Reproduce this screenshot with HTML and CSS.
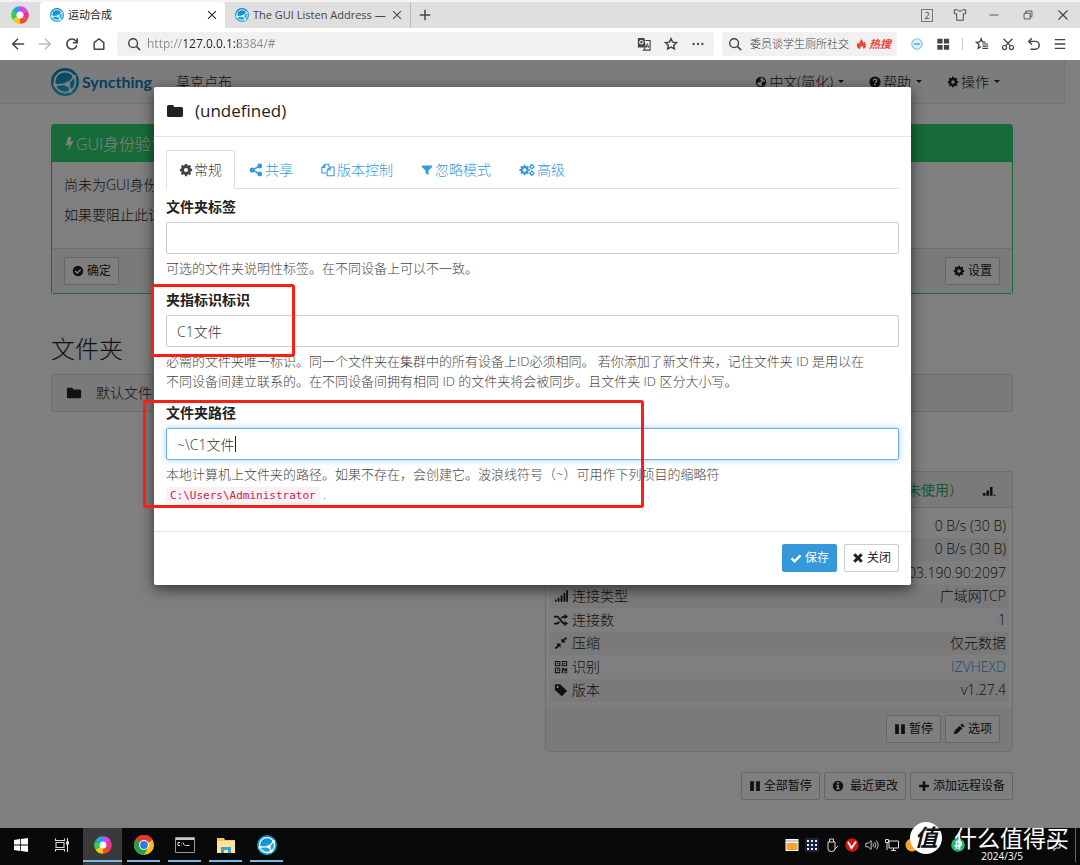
FILE: index.html
```html
<!DOCTYPE html>
<html lang="zh-CN">
<head>
<meta charset="utf-8">
<title>运动合成</title>
<link rel="stylesheet" href="styles.css">
</head>
<body>
<svg class="defs" aria-hidden="true">
  <defs>
    <linearGradient id="sync-blue" x1="0" y1="0" x2="0" y2="1"><stop offset="0" stop-color="#0882c8"/><stop offset="1" stop-color="#26b6db"/></linearGradient>
  </defs>
  <symbol id="sync" viewBox="0 0 32 32"><circle cx="16" cy="16" r="16" fill="url(#sync-blue)"/><g fill="none" stroke="#fff" stroke-width="2"><circle cx="16" cy="16" r="12"/><path d="M19 18.500L26.500 10M19 18.500L4.500 19.500M19 18.500L23 25.500"/></g><g fill="#fff"><circle cx="19" cy="18.500" r="3"/><circle cx="26.500" cy="10" r="2.200"/><circle cx="4.800" cy="19.500" r="2.200"/><circle cx="22.500" cy="26" r="2.200"/></g></symbol>
  <symbol id="swirl" viewBox="0 0 20 20"><g fill="none" stroke-width="5.500"><path d="M10 4A6 6 0 0 1 15.200 7" stroke="#d646e8"/><path d="M15.200 7A6 6 0 0 1 15.200 13" stroke="#f0348c"/><path d="M15.200 13A6 6 0 0 1 10 16" stroke="#f34a2a"/><path d="M10 16A6 6 0 0 1 4.800 13" stroke="#f9c51d"/><path d="M4.800 13A6 6 0 0 1 4.800 7" stroke="#38cf4b"/><path d="M4.800 7A6 6 0 0 1 10 4" stroke="#2c9df0"/></g><circle cx="10" cy="10" r="3.500" fill="#fff"/></symbol>
  <symbol id="close" viewBox="0 0 16 16"><path d="M3.500 3.500l9 9m0-9l-9 9" fill="none" stroke="currentColor" stroke-width="1.200"/></symbol>
  <symbol id="add" viewBox="0 0 16 16"><path d="M8 1v14M1 8h14" fill="none" stroke="currentColor" stroke-width="2"/></symbol>
  <symbol id="back" viewBox="0 0 16 16"><path d="M15 8H2.500M8 2L2 8l6 6" fill="none" stroke="currentColor" stroke-width="1.700"/></symbol>
  <symbol id="forward" viewBox="0 0 16 16"><path d="M1 8h12.500M8 2l6 6-6 6" fill="none" stroke="currentColor" stroke-width="1.700"/></symbol>
  <symbol id="reload" viewBox="0 0 16 16"><path d="M13.500 9.500A5.800 5.800 0 1 1 12.500 4.500L14 6M14 1.500V6.500H9" fill="none" stroke="currentColor" stroke-width="1.700"/></symbol>
  <symbol id="home" viewBox="0 0 16 16"><path d="M2.500 6.500L8 2l5.500 4.500V14h-11z" fill="none" stroke="currentColor" stroke-width="1.700" stroke-linejoin="round"/></symbol>
  <symbol id="search" viewBox="0 0 16 16"><circle cx="7" cy="7" r="5" fill="none" stroke="currentColor" stroke-width="1.600"/><path d="M10.700 10.700L15 15" stroke="currentColor" stroke-width="1.800"/></symbol>
  <symbol id="translate" viewBox="0 0 16 16"><path d="M1 1h7.500l1.500 11H1z" fill="currentColor"/><path d="M9.500 4H15v11H7.500l2-3" fill="none" stroke="currentColor" stroke-width="1.300"/><circle cx="5" cy="6" r="2" fill="none" stroke="#fff" stroke-width="1.200"/><path d="M10 12.500l1.800-5 1.800 5M10.600 11h2.500" fill="none" stroke="currentColor"/></symbol>
  <symbol id="star" viewBox="0 0 16 16"><path d="M8 1.800l1.900 4 4.400.6-3.200 3 .8 4.300L8 11.600l-3.900 2.100.8-4.300-3.200-3 4.400-.6z" fill="none" stroke="currentColor" stroke-width="1.600"/></symbol>
  <symbol id="dots" viewBox="0 0 16 16"><g fill="currentColor"><circle cx="3" cy="8" r="1.300"/><circle cx="8" cy="8" r="1.300"/><circle cx="13" cy="8" r="1.300"/></g></symbol>
  <symbol id="fire" viewBox="0 0 16 16"><path d="M8 1c1 2 3 3.500 3.500 6L13 5c2 4 2.500 8-2 10 1-2-.5-3.500-2-5-1 2-3 3-2 5-4.500-1-6-5-3-9l1.500 2C5.500 5 8 4 8 1z" fill="#f2403a"/></symbol>
  <symbol id="minus-circle" viewBox="0 0 16 16"><circle cx="8" cy="8" r="6" fill="#dceffd" stroke="#7cbff2" stroke-width="1.200"/><path d="M4.500 8h7" stroke="#4aa2e8" stroke-width="1.600"/></symbol>
  <symbol id="apps" viewBox="0 0 16 16"><path d="M1.500 2h6v5.500h-6zM9 2h6v5.500H9zM1.500 9h6v5.500h-6zM9 9h6v5.500H9z" fill="currentColor"/></symbol>
  <symbol id="fav" viewBox="0 0 16 16"><path d="M12 6L8.500 5.700 7 2 5.500 5.700 1.500 6l3 2.600L3.500 13 7 10.800" fill="none" stroke="currentColor" stroke-width="1.500"/><path d="M8.500 8H15M8.500 10.500H15M8.500 13H15" stroke="currentColor" stroke-width="1.400"/></symbol>
  <symbol id="cut" viewBox="0 0 16 16"><g fill="none" stroke="currentColor" stroke-width="1.400"><circle cx="4" cy="12" r="2.300"/><circle cx="12" cy="12" r="2.300"/><path d="M5.300 10L13 2M10.700 10L3 2"/></g></symbol>
  <symbol id="undo" viewBox="0 0 16 16"><path d="M5.500 1.500L2 5l3.500 3.500M2 5h7.500a4.500 4.500 0 0 1 0 9H4" fill="none" stroke="currentColor" stroke-width="1.700"/></symbol>
  <symbol id="menu" viewBox="0 0 16 16"><path d="M2 3h12M2 8h12M2 13h12" stroke="currentColor" stroke-width="1.700"/></symbol>
  <symbol id="shirt" viewBox="0 0 16 16"><path d="M5 2H1.500v4.500h2.700V14h7.600V6.500h2.700V2H11l-1.500 1.500h-3z" fill="none" stroke="currentColor" stroke-width="1.100"/></symbol>
  <symbol id="minimize" viewBox="0 0 16 16"><path d="M3 8h10" stroke="currentColor"/></symbol>
  <symbol id="restore" viewBox="0 0 16 16"><path d="M3.500 6h7v6.500h-7zM5.500 6V3.500h7V10h-2" fill="none" stroke="currentColor"/></symbol>
  <symbol id="globe" viewBox="0 0 16 16"><circle cx="8" cy="8" r="6.300" fill="none" stroke="currentColor" stroke-width="1.400"/><path d="M3 4l3-2 2 1-1 2 2 1-2 2-2 0-1 2-2-3zM9 8l3-1 2 1-1 4-3 2-1-3zM10 2l3 2-2 1z" fill="currentColor"/></symbol>
  <symbol id="question" viewBox="0 0 16 16"><circle cx="8" cy="8" r="7.500" fill="currentColor"/><path d="M5.700 6.300C5.800 3.300 10.500 3.500 10.300 6.300 10.200 7.800 8 7.800 8 9.500" fill="none" stroke="#fff" stroke-width="1.800"/><path d="M7 10.800h2v2H7z" fill="#fff"/></symbol>
  <symbol id="cog" viewBox="0 0 16 16"><circle cx="8" cy="8" r="4" fill="none" stroke="currentColor" stroke-width="3.400"/><path d="M8 1v3M8 12v3M1 8h3M12 8h3M3 3l2.200 2.200M10.800 10.800L13 13M13 3l-2.200 2.200M5.200 10.800L3 13" stroke="currentColor" stroke-width="2.600"/></symbol>
  <symbol id="cogs" viewBox="0 0 20 16"><circle cx="7" cy="8" r="3.600" fill="none" stroke="currentColor" stroke-width="2.600"/><path d="M7 1.500v2M7 12.500v2M.5 8h2M11.500 8h2M2.400 3.400l1.500 1.500M10.100 11.100l1.500 1.500M11.600 3.400l-1.500 1.500M3.900 11.100l-1.500 1.500" stroke="currentColor" stroke-width="2.300"/><g fill="none" stroke="currentColor" stroke-width="1.500"><circle cx="16" cy="4" r="2"/><circle cx="16" cy="12" r="2"/><path d="M16 .5v1.500M16 6v1.500M12.700 4h1.300M18 4h1.500M16 8.500V10M16 14v1.500M12.700 12h1.300M18 12h1.500"/></g></symbol>
  <symbol id="bolt" viewBox="0 0 10 16"><path d="M4 1h3.500L6 5.500l3.500-.8L4 15.500l1.500-7L1.800 9.400z" fill="currentColor"/></symbol>
  <symbol id="check-circle" viewBox="0 0 16 16"><circle cx="8" cy="8" r="7" fill="currentColor"/><path d="M4.300 8l2.700 2.700 4.700-4.700" fill="none" stroke="#fff" stroke-width="2"/></symbol>
  <symbol id="folder" viewBox="0 0 18 16"><path d="M1 3.500Q1 2 2.500 2h4Q8 2 8 3.500V4h7.500Q17 4 17 5.500v7q0 1.500-1.500 1.500h-13Q1 14 1 12.500z" fill="currentColor"/></symbol>
  <symbol id="share" viewBox="0 0 16 16"><path d="M12.500 3.500L4 8l8.500 4.500" fill="none" stroke="currentColor" stroke-width="1.800"/><g fill="currentColor"><circle cx="12.300" cy="3.500" r="2.800"/><circle cx="3.700" cy="8" r="2.900"/><circle cx="12.300" cy="12.500" r="2.800"/></g></symbol>
  <symbol id="files" viewBox="0 0 16 16"><path d="M6 11.500H1V5l3.500-3.500H9v3M4.500 1.500V5H1M7 8l3.500-3.500H15v10H7zM10.500 4.500V8H7" fill="none" stroke="currentColor" stroke-width="1.200"/></symbol>
  <symbol id="filter" viewBox="0 0 16 16"><path d="M1 2h14v1.500L10 8.500v6.500L6 12V8.500L1 3.500z" fill="currentColor"/></symbol>
  <symbol id="check" viewBox="0 0 16 16"><path d="M2 8.500l4 4 8-8" fill="none" stroke="currentColor" stroke-width="3.200"/></symbol>
  <symbol id="times" viewBox="0 0 16 16"><path d="M3 3l10 10M13 3L3 13" stroke="currentColor" stroke-width="4"/></symbol>
  <symbol id="signal" viewBox="0 0 16 16"><path d="M1 12h2v2.500H1zM4.200 10h2.100v4.500H4.200zM7.500 7.500h2.200v7H7.500zM10.800 4.500H13v10h-2.200zM14 1.500h2v13h-2z" fill="currentColor"/></symbol>
  <symbol id="signal-low" viewBox="0 0 16 16"><path d="M1 11.500h3v3H1zM5 8.500h3v6H5zM9 4.500h3v10H9zM13 13.500h2.500v1H13z" fill="currentColor"/></symbol>
  <symbol id="random" viewBox="0 0 16 16"><path d="M0 4h3c4 0 5 8 9 8h1M0 12h3c1.500 0 2.300-.8 3-2M8.500 6c.8-1.200 1.800-2 3.500-2h1" fill="none" stroke="currentColor" stroke-width="2"/><path d="M12 1l4 3-4 3zM12 9l4 3-4 3z" fill="currentColor"/></symbol>
  <symbol id="compress" viewBox="0 0 16 16"><path d="M8.500 7.500v-5l1.700 1.700L13.400 1 15 2.600l-3.200 3.200 1.700 1.700zM7.500 8.500v5l-1.700-1.700L2.600 15 1 13.400l3.200-3.200-1.700-1.700z" fill="currentColor"/></symbol>
  <symbol id="qr" viewBox="0 0 16 16"><path d="M1.600 1.600h5v5h-5zM9.400 1.600h5v5h-5zM1.600 9.400h5v5h-5z" fill="none" stroke="currentColor" stroke-width="1.200"/><path d="M3.300 3.300h1.600v1.600H3.300zM11.100 3.300h1.600v1.600h-1.600zM3.300 11.100h1.600v1.600H3.300zM9 9h3v1.500h1.500V9H15v4h-3v-1.500h-1.500V15H9zM12 14h3v1h-3z" fill="currentColor"/></symbol>
  <symbol id="tag" viewBox="0 0 16 16"><path fill-rule="evenodd" d="M1 2.500Q1 1.500 2 1.500h5L15 9l-6 6-8-7zM4 3.200a1.300 1.300 0 1 0 .1 0z" fill="currentColor"/></symbol>
  <symbol id="pause" viewBox="0 0 16 16"><path d="M1.500 1.500h5v13h-5zM9.500 1.500h5v13h-5z" fill="currentColor"/></symbol>
  <symbol id="pencil" viewBox="0 0 16 16"><path d="M1 15l1-4.500L9 3.500 12.500 7l-7 7zM10 2.500L11.500 1q.5-.5 1 0L15 3.500q.5.500 0 1L13.500 6z" fill="currentColor"/></symbol>
  <symbol id="info" viewBox="0 0 16 16"><circle cx="8" cy="8" r="7" fill="currentColor"/><path d="M6.800 2.800h2.400v2.200H6.800zM5.800 6.300h3.400v4.700h1.200v1.800H5.600V11h1.200V8h-1z" fill="#fff"/></symbol>
  <symbol id="plus" viewBox="0 0 16 16"><path d="M8 1.500v13M1.500 8h13" stroke="currentColor" stroke-width="3.400"/></symbol>
  <symbol id="windows" viewBox="0 0 16 16"><path d="M1 3l6-.9v5.500H1zM7.800 2L15 1v6.600H7.800zM1 8.400h6v5.500L1 13zM7.800 8.400H15V15l-7.200-1z" fill="#fff"/></symbol>
  <symbol id="taskview" viewBox="0 0 16 16"><path d="M2 5.500h8v5H2zM1.500 1.500v2h9v-2M1.500 14.500v-2h9v2M13.500 1v14" fill="none" stroke="#ddd" stroke-width="1.100"/><path d="M12 4.500h3v3h-3z" fill="#ddd"/></symbol>
  <symbol id="chrome" viewBox="0 0 20 20"><circle cx="10" cy="10" r="10" fill="#fbc116"/><path d="M10 10L1.300 5A10 10 0 0 1 18.700 5z" fill="#e33b2e"/><path d="M10 10L1.300 5A10 10 0 0 0 10 20l4.300-7.500z" fill="#24a148"/><circle cx="10" cy="10" r="5" fill="#fff"/><circle cx="10" cy="10" r="3.900" fill="#3178e6"/></symbol>
  <symbol id="terminal" viewBox="0 0 20 16"><path d="M.5.500h19v15H.5z" fill="#080808" stroke="#999"/><path d="M1 1h18v2H1z" fill="#c9c9c9"/><path d="M5 5.500H3v3h2M6.500 6v.5M6.500 8v.5M8 5.500l1.500 3M10.500 8.500h4" fill="none" stroke="#ddd"/></symbol>
  <symbol id="explorer" viewBox="0 0 20 18"><path d="M1 2h7l1 2h10v13H1z" fill="#f5c95b"/><path d="M1 5h18v12H1z" fill="#ffe59a"/><path d="M5 17v-6h10v6h-3v-3H8v3z" fill="#3ba3dc"/></symbol>
  <symbol id="tray-window" viewBox="0 0 14 14"><path d="M.5 1h13v12H.5z" fill="#fff"/><path d="M1.500 5h11v7h-11z" fill="#f6a429"/><path d="M1 3h12" stroke="#999"/></symbol>
  <symbol id="tray-grid" viewBox="0 0 14 14"><path d="M0 0h14v14H0z" fill="#17233b"/><path d="M2 3h10M2 7h10M2 11h10" stroke="#e6ebf5" stroke-width="2" stroke-dasharray="2 2"/></symbol>
  <symbol id="tray-usb" viewBox="0 0 14 14"><path d="M4.500 4V1h4v3M3 4h7v7q0 2.500-3.500 2.500T3 11zM10 11l3-3" fill="none" stroke="#ddd"/></symbol>
  <symbol id="tray-v" viewBox="0 0 14 14"><circle cx="7" cy="7" r="6.700" fill="#ce1618"/><path d="M3 4l3.500 6L11 3.500" fill="none" stroke="#fff" stroke-width="1.900"/></symbol>
  <symbol id="tray-sound" viewBox="0 0 16 14"><path d="M1 5h2.500L7 2v10L3.500 9H1zM9 5q1.500 2 0 4M11 3.500q3 3.500 0 7M13 2q4 5 0 10" fill="none" stroke="#ddd"/></symbol>
  <symbol id="tray-net" viewBox="0 0 14 14"><path d="M4 3h9.500v7H4zM8.500 10v2.500M6 12.500h5M.5 1.500h3v3h-3zM2 4.500V12" fill="none" stroke="#ddd"/></symbol>
  <symbol id="tray-orange" viewBox="0 0 14 14"><circle cx="7" cy="7" r="6.500" fill="#f7a325"/></symbol>
  <symbol id="tray-green" viewBox="0 0 14 14"><circle cx="7" cy="7" r="6.800" fill="#20ba72"/><path d="M5.500 11V3.500H8a2 2 0 0 1 0 4.500H3.500" fill="none" stroke="#fff" stroke-width="1.500"/></symbol>
  <symbol id="tray-note" viewBox="0 0 14 14"><path d="M1 2h12v8H9l-2 2.500V10H1z" fill="none" stroke="#ddd"/></symbol>
</svg>

<header class="browser">
  <div class="tabstrip">
    <button class="app-logo" aria-label="浏览器"><svg class="i20"><use href="#swirl"/></svg></button>
    <div class="tab tab-active"><svg class="i14"><use href="#sync"/></svg><span class="tab-title">运动合成</span><button aria-label="关闭标签"><svg class="i14"><use href="#close"/></svg></button></div>
    <div class="tab tab-other"><svg class="i14"><use href="#sync"/></svg><span class="tab-title">The GUI Listen Address —</span><button aria-label="关闭标签"><svg class="i14"><use href="#close"/></svg></button></div>
    <button class="new-tab" aria-label="新标签"><svg class="i12"><use href="#add"/></svg></button>
    <div class="window-controls">
      <button class="count">2</button>
      <button aria-label="皮肤"><svg class="i14"><use href="#shirt"/></svg></button>
      <button aria-label="最小化"><svg class="i14"><use href="#minimize"/></svg></button>
      <button aria-label="还原"><svg class="i14"><use href="#restore"/></svg></button>
      <button aria-label="关闭"><svg class="i16"><use href="#close"/></svg></button>
    </div>
  </div>
  <div class="toolbar">
    <div class="nav-buttons">
      <button aria-label="后退"><svg class="i14"><use href="#back"/></svg></button>
      <button class="disabled" aria-label="前进"><svg class="i14"><use href="#forward"/></svg></button>
      <button aria-label="刷新"><svg class="i14"><use href="#reload"/></svg></button>
      <button aria-label="主页"><svg class="i14"><use href="#home"/></svg></button>
    </div>
    <div class="field address">
      <svg class="i14"><use href="#search"/></svg>
      <input class="url" aria-label="地址" value="http://127.0.0.1:8384/#">
      <button aria-label="翻译"><svg class="i14"><use href="#translate"/></svg></button>
      <button aria-label="收藏"><svg class="i14"><use href="#star"/></svg></button>
      <button aria-label="更多"><svg class="i14"><use href="#dots"/></svg></button>
    </div>
    <div class="field hot">
      <svg class="i14"><use href="#search"/></svg>
      <input aria-label="搜索" value="委员谈学生厕所社交">
      <svg class="i12"><use href="#fire"/></svg><b>热搜</b>
    </div>
    <div class="tools">
      <button aria-label="拦截"><svg class="i14"><use href="#minus-circle"/></svg></button>
      <button aria-label="应用"><svg class="i14"><use href="#apps"/></svg></button>
      <span class="divider"></span>
      <button aria-label="收藏夹"><svg class="i14"><use href="#fav"/></svg></button>
      <button aria-label="截图"><svg class="i14"><use href="#cut"/></svg></button>
      <button aria-label="恢复"><svg class="i14"><use href="#undo"/></svg></button>
      <button aria-label="菜单"><svg class="i14"><use href="#menu"/></svg></button>
    </div>
  </div>
</header>

<div class="viewport">
  <div class="page">
    <nav class="navbar">
      <a class="brand" href="#"><svg class="i28"><use href="#sync"/></svg>Syncthing</a>
      <span class="device">莫克卢布</span>
      <div class="nav-links">
        <a href="#"><svg class="i12"><use href="#globe"/></svg>中文(简化)<span class="caret-down"></span></a>
        <a href="#"><svg class="i12"><use href="#question"/></svg>帮助<span class="caret-down"></span></a>
        <a href="#"><svg class="i12"><use href="#cog"/></svg>操作<span class="caret-down"></span></a>
      </div>
    </nav>
    <main class="container">
      <section class="notice">
        <h2><svg class="bolt"><use href="#bolt"/></svg>GUI身份验证</h2>
        <div class="notice-body"><p>尚未为GUI身份</p><p>如果要阻止此讨</p></div>
        <div class="notice-footer">
          <button class="btn"><svg class="i12"><use href="#check-circle"/></svg>确定</button>
          <button class="btn"><svg class="i12"><use href="#cog"/></svg>设置</button>
        </div>
      </section>
      <h3>文件夹</h3>
      <button class="folder-row"><svg class="i16"><use href="#folder"/></svg>默认文件</button>
      <div class="devices">
        <section class="device-panel">
          <header><span>未使用）</span><svg class="i14"><use href="#signal-low"/></svg></header>
          <table>
            <tr><th></th><td>0 B/s (30 B)</td></tr>
            <tr><th></th><td>0 B/s (30 B)</td></tr>
            <tr><th></th><td>203.190.90:2097</td></tr>
            <tr><th><svg class="i14"><use href="#signal"/></svg>连接类型</th><td>广域网TCP</td></tr>
            <tr><th><svg class="i14"><use href="#random"/></svg>连接数</th><td>1</td></tr>
            <tr><th><svg class="i14"><use href="#compress"/></svg>压缩</th><td>仅元数据</td></tr>
            <tr><th><svg class="i14"><use href="#qr"/></svg>识别</th><td><a href="#">IZVHEXD</a></td></tr>
            <tr><th><svg class="i14"><use href="#tag"/></svg>版本</th><td>v1.27.4</td></tr>
          </table>
          <footer>
            <button class="btn"><svg class="i12"><use href="#pause"/></svg>暂停</button>
            <button class="btn"><svg class="i12"><use href="#pencil"/></svg>选项</button>
          </footer>
        </section>
        <div class="device-actions">
          <button class="btn"><svg class="i12"><use href="#pause"/></svg>全部暂停</button>
          <button class="btn"><svg class="i12"><use href="#info"/></svg>&nbsp;最近更改</button>
          <button class="btn"><svg class="i12"><use href="#plus"/></svg>添加远程设备</button>
        </div>
      </div>
    </main>
  </div>
  <div class="backdrop">
    <form class="modal" role="dialog" aria-labelledby="modal-title">
      <h1 id="modal-title"><svg class="i18"><use href="#folder"/></svg>(undefined)</h1>
      <div class="modal-body">
        <div class="tabs">
          <a class="active" href="#"><svg class="i14"><use href="#cog"/></svg>常规</a>
          <a href="#"><svg class="i14"><use href="#share"/></svg>共享</a>
          <a href="#"><svg class="i14"><use href="#files"/></svg>版本控制</a>
          <a href="#"><svg class="i12"><use href="#filter"/></svg>忽略模式</a>
          <a href="#"><svg class="i16"><use href="#cogs"/></svg>高级</a>
        </div>
        <div class="group">
          <label for="f-label">文件夹标签</label>
          <input id="f-label" type="text">
          <p>可选的文件夹说明性标签。在不同设备上可以不一致。</p>
        </div>
        <div class="group">
          <label for="f-id">夹指标识标识</label>
          <input id="f-id" type="text" value="C1文件">
          <p>必需的文件夹唯一标识。同一个文件夹在集群中的所有设备上ID必须相同。 若你添加了新文件夹，记住文件夹 ID 是用以在<br>不同设备间建立联系的。在不同设备间拥有相同 ID 的文件夹将会被同步。且文件夹 ID 区分大小写。</p>
        </div>
        <div class="group">
          <label for="f-path">文件夹路径</label>
          <div class="focused"><input id="f-path" type="text" value="~\C1文件"><span class="text-caret"></span></div>
          <p>本地计算机上文件夹的路径。如果不存在，会创建它。波浪线符号（~）可用作下列项目的缩略符<br><code>C:\Users\Administrator</code> .</p>
        </div>
      </div>
      <div class="modal-footer">
        <button type="button" class="btn primary"><svg class="i12"><use href="#check"/></svg>保存</button>
        <button type="button" class="btn"><svg class="i12"><use href="#times"/></svg>关闭</button>
      </div>
    </form>
  </div>
</div>

<footer class="taskbar">
  <button aria-label="开始"><svg class="i16"><use href="#windows"/></svg></button>
  <button aria-label="任务视图"><svg class="i16"><use href="#taskview"/></svg></button>
  <button class="open current" aria-label="浏览器"><svg class="i20"><use href="#swirl"/></svg></button>
  <button class="open" aria-label="Chrome"><svg class="i20"><use href="#chrome"/></svg></button>
  <button class="open" aria-label="终端"><svg class="i20"><use href="#terminal"/></svg></button>
  <button class="open" aria-label="资源管理器"><svg class="i20"><use href="#explorer"/></svg></button>
  <button class="open" aria-label="Syncthing"><svg class="i20"><use href="#sync"/></svg></button>
  <div class="tray">
    <svg class="i14"><use href="#tray-window"/></svg>
    <svg class="i14"><use href="#tray-grid"/></svg>
    <svg class="i14"><use href="#tray-usb"/></svg>
    <svg class="i14"><use href="#tray-v"/></svg>
    <svg class="i14"><use href="#tray-sound"/></svg>
    <svg class="i14"><use href="#tray-net"/></svg>
    <svg class="i14"><use href="#tray-orange"/></svg>
    <svg class="i14 tray-last"><use href="#tray-green"/></svg>
    <time>2024/3/5</time>
    <svg class="i14"><use href="#tray-note"/></svg>
    <span class="show-desktop"></span>
  </div>
</footer>

<div class="mark mark-id"></div>
<div class="mark mark-path"></div>
<div class="watermark"><span class="seal">值</span>什么值得买</div>
</body>
</html>
```
FILE: styles.css
```css
* { box-sizing: border-box; }
html, body { height: 100%; }
body {
  margin: 0;
  display: flex;
  flex-direction: column;
  overflow: hidden;
  position: relative;
  font: 300 14px/20px "Open Sans", "Noto Sans CJK SC", sans-serif;
  color: #222;
  background: #fff;
}
button, input { font: inherit; color: inherit; }
button { display: inline-flex; align-items: center; justify-content: center; padding: 0; border: 0; background: none; }
a { color: #3498db; text-decoration: none; }
h1, h2, h3, p { margin: 0; font-weight: 300; }
svg { flex: none; }
.defs { position: absolute; width: 0; height: 0; }
.i12 { width: 12px; height: 12px; }
.i14 { width: 14px; height: 14px; }
.i16 { width: 16px; height: 16px; }
.i18 { width: 18px; height: 18px; }
.i20 { width: 20px; height: 20px; }
.i28 { width: 28px; height: 28px; }

/* Browser chrome */
.browser { color: #444; font-size: 11px; }
.tabstrip { display: flex; height: 28px; border-top: 2px solid #f4f4f4; background: #dfdfdf; }
.app-logo { width: 40px; }
.tab { display: flex; align-items: center; gap: 4px; }
.tab-title { flex: 1; white-space: nowrap; overflow: hidden; font-weight: 400; }
.tab-active { width: 185px; padding: 0 6px 0 10px; background: #fff; border-radius: 4px 4px 0 0; color: #222; }
.tab-other { width: 186px; padding: 0 6px 0 10px; border-right: 1px solid #bbb; }
.new-tab { width: 28px; }
.window-controls { margin-left: auto; display: flex; align-items: center; gap: 20px; padding-right: 9px; }
.count { width: 12px; height: 13px; border: 1px solid #777; font-size: 9px; line-height: 11px; font-weight: 400; }
.toolbar { display: flex; align-items: center; gap: 8px; height: 32px; padding: 0 15px 0 11px; }
.nav-buttons { display: flex; gap: 13px; width: 98px; }
.disabled { color: #bbb; }
.field { display: flex; align-items: center; height: 24px; background: #f1f1f1; border-radius: 3px; }
.field input { min-width: 0; border: 0; padding: 0; background: none; outline: 0; }
.address { flex: 1; padding: 0 9px 0 10px; gap: 13px; }
.address input { flex: 1; margin-left: -7px; font-size: 12px; }
.address .url {
  font-weight: 400;
  color: transparent;
  background: linear-gradient(90deg, #888 37px, #222 37px, #222 91px, #888 91px);
  -webkit-background-clip: text;
  background-clip: text;
}
.hot { width: 175px; padding: 0 6px; gap: 2px; }
.hot input { flex: 1; margin-left: 6px; }
.hot b { color: #f2403a; font-style: italic; font-weight: 700; white-space: nowrap; }
.tools { display: flex; align-items: center; gap: 12px; padding-left: 5px; margin-right: -2px; }
.divider { width: 1px; height: 12px; background: #ccc; }

/* Page below the dialog */
.viewport { flex: 1; min-height: 0; position: relative; overflow: hidden; }
.page { margin-right: 15px; }
.navbar { display: flex; align-items: center; height: 44px; padding: 0 64px 0 51px; background: #f8f8f8; border: solid #e7e7e7; border-width: 0 1px 1px 0; }
.brand { display: flex; align-items: center; gap: 3px; font: 700 16px/20px Lato, sans-serif; color: #0a80bd; }
.device { margin-left: 24px; }
.nav-links { margin-left: auto; display: flex; gap: 25px; }
.nav-links a { display: flex; align-items: center; gap: 2px; color: #222; }
.caret-down { margin-left: 3px; border: solid transparent; border-width: 3px 3px 0; border-top-color: currentColor; }
.container { padding: 20px 52px 0 51px; }
.notice { border: 1px solid #2fd673; border-radius: 3px; }
.notice h2 { display: flex; align-items: center; gap: 2px; height: 37px; padding: 0 12px; font-size: 16px; color: #fff; background: #2fd673; }
.bolt { width: 10px; height: 16px; }
.notice-body { display: grid; gap: 10px; padding: 13px 12px 23px; }
.notice-footer { display: flex; justify-content: space-between; padding: 8px 12px 8px; background: #f5f5f5; border-top: 1px solid #ddd; }
.btn { height: 28px; gap: 3px; padding: 0 7px; border: 1px solid #ccc; border-radius: 2px; background: #fff; color: #222; font-size: 12px; font-weight: 400; white-space: nowrap; }
h3 { padding: 39px 0 9px; font-size: 24px; line-height: 32px; }
.folder-row { display: flex; justify-content: flex-start; gap: 14px; width: 100%; height: 38px; padding: 0 14px; border: 1px solid #ddd; border-radius: 3px; background: #f5f5f5; }
.devices { width: 468px; margin: 59px 0 0 auto; }
.device-panel { border: 1px solid #ddd; border-radius: 3px; }
.device-panel header { display: flex; align-items: center; justify-content: flex-end; gap: 19px; height: 36px; padding: 0 16px; background: #f5f5f5; border-bottom: 1px solid #ddd; color: #222; }
.device-panel header span { color: #2ab05c; font-weight: 400; }
table { width: calc(100% - 8px); height: 188px; margin: 6px 4px 5px; border-collapse: collapse; }
tr:nth-child(even) { background: #f4f4f4; }
th, td { padding: 0 2px 0 4px; font-weight: 300; text-align: left; line-height: 20px; }
td { text-align: right; }
th svg { margin-right: 4px; vertical-align: -2px; }
.device-panel footer { display: flex; justify-content: flex-end; gap: 4px; padding: 8px 12px; background: #f5f5f5; }
.device-actions { display: flex; justify-content: flex-end; gap: 4px; margin-top: 20px; }

/* Dialog */
.backdrop { position: absolute; inset: 0; padding: 27px 169px 0 154px; background: rgba(0, 0, 0, 0.5); }
.modal { display: block; margin: 0; background: #fff; border-radius: 2px; box-shadow: 0 4px 14px rgba(0, 0, 0, 0.6); }
.modal h1 { display: flex; align-items: center; gap: 11px; height: 50px; padding: 0 12px 2px; border-bottom: 1px solid #e5e5e5; font-size: 17px; font-weight: 400; }
.modal-body { padding: 13px 12px 27px; display: grid; gap: 12px; }
.tabs { display: flex; border-bottom: 1px solid #ddd; margin-bottom: -4px; }
.tabs a { display: flex; align-items: center; gap: 2px; height: 39px; padding: 0 13px; border: 1px solid transparent; margin-bottom: -1px; }
.tabs .active { gap: 1px; padding: 0 12px; color: #444; background: #fff; border-color: #ddd; border-bottom-color: #fff; border-radius: 2px 2px 0 0; }
.group { display: grid; }
.group label { font-weight: 700; margin-bottom: 5px; }
.group input { width: 100%; height: 32px; padding: 0 10px; border: 1px solid #ccc; border-radius: 2px; background: #fff; color: #333; font-size: 14px; outline: 0; }
.group p { margin-top: 4px; font-size: 13px; color: #444; }
.focused { position: relative; display: flex; }
.focused .text-caret { position: absolute; left: 69px; top: 8px; width: 1px; height: 16px; background: #222; }
.focused input { border-color: #66afe9; box-shadow: 0 0 6px rgba(102, 175, 233, 0.6); }
code { padding: 2px 4px; background: #f9f2f4; color: #c7254e; font: 11px "DejaVu Sans Mono", monospace; }
.modal-footer { display: flex; justify-content: flex-end; gap: 7px; padding: 12px 12px 13px; border-top: 1px solid #e5e5e5; }
.primary { background: #3498db; border-color: #3498db; color: #fff; }

/* Taskbar */
.taskbar { display: flex; height: 37px; padding-left: 1px; background: #090909; }
.taskbar > button { width: 39px; margin-right: 2px; padding-bottom: 3px; position: relative; }
.taskbar .current { background: #3a3a3a; }
.open::after { content: ""; position: absolute; left: 3px; right: 3px; bottom: 3px; height: 2px; background: #76b9ed; }
.current::after { left: 0; right: 0; }
.tray { margin-left: auto; display: flex; align-items: center; gap: 6px; color: #fff; font-size: 10px; padding: 0 4px 3px 0; }
.tray-last { margin-left: 26px; }
.tray time { align-self: flex-end; margin: 0 18px 0 10px; line-height: 12px; font-weight: 400; }
.show-desktop { width: 1px; align-self: stretch; margin-left: 8px; background: #666; }

/* Annotations over the capture */
.mark { position: absolute; border: 3px solid #fa1e14; border-radius: 3px; pointer-events: none; }
.mark-id { left: 151px; top: 284px; width: 144px; height: 73px; }
.mark-path { left: 143px; top: 400px; width: 501px; height: 108px; }
.watermark { position: absolute; right: 11px; bottom: 11px; display: flex; align-items: center; gap: 12px; color: #fff; font-size: 23px; font-weight: 400; line-height: 32px; white-space: nowrap; }
.seal { width: 32px; height: 32px; border-radius: 50%; background: #fff; color: #111; text-align: center; font-weight: 700; font-style: italic; line-height: 30px; }
```
